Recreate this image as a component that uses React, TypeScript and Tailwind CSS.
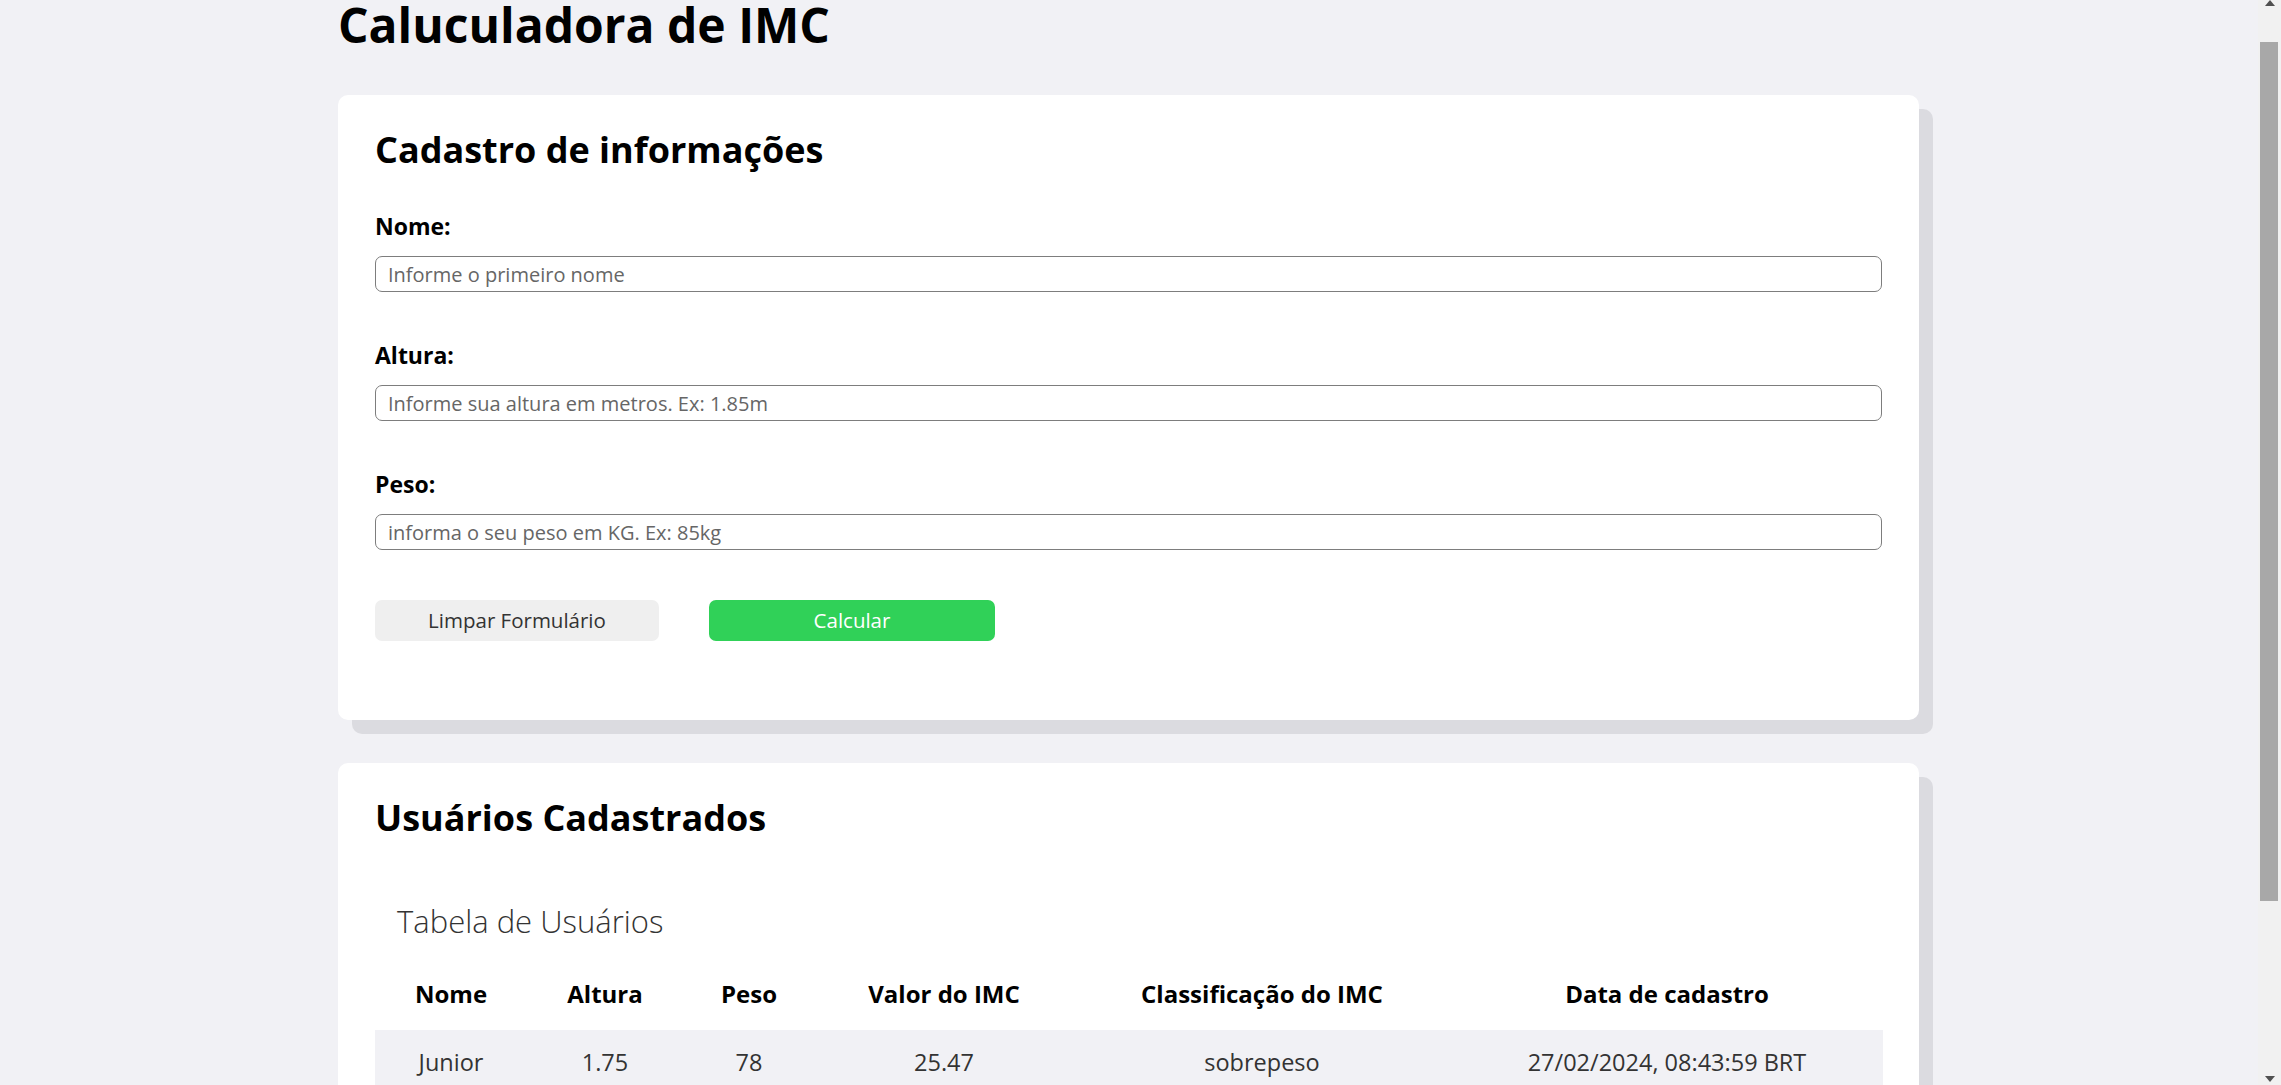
import React from "react";

const columns = [
  { label: "Nome", width: "w-[152px]" },
  { label: "Altura", width: "w-[156px]" },
  { label: "Peso", width: "w-[132px]" },
  { label: "Valor do IMC", width: "w-[258px]" },
  { label: "Classificação do IMC", width: "w-[378px]" },
  { label: "Data de cadastro", width: "w-[432px]" },
];

const users = [
  {
    nome: "Junior",
    altura: "1.75",
    peso: "78",
    imc: "25.47",
    classificacao: "sobrepeso",
    data: "27/02/2024, 08:43:59 BRT",
  },
  {
    nome: "Maria",
    altura: "1.62",
    peso: "55",
    imc: "20.96",
    classificacao: "normal",
    data: "27/02/2024, 08:45:12 BRT",
  },
];

function Field({
  label,
  placeholder,
  first,
}: {
  label: string;
  placeholder: string;
  first?: boolean;
}) {
  return (
    <div className={first ? "flex flex-col" : "mt-[52px] flex flex-col"}>
      <label className="mb-[18px] text-[23px] font-bold leading-none">{label}</label>
      <input
        type="text"
        placeholder={placeholder}
        className="h-[36px] w-full rounded-[7px] border-[1.5px] border-[#7d7d7d] bg-white px-[12px] text-[20px] text-[#333] outline-none placeholder:text-[#666]"
      />
    </div>
  );
}

function Scrollbar() {
  return (
    <div className="flex w-[23px] shrink-0 flex-col bg-[#f1f1f1]">
      {/* up arrow */}
      <div className="flex h-[21px] justify-center pl-[1px]">
        <svg width="10" height="6" viewBox="0 0 10 6">
          <polygon points="0,6 5,0 10,6" fill="#505050" />
        </svg>
      </div>
      {/* thumb */}
      <div className="mt-[21px] ml-[2px] mr-[3px] h-[859px] bg-[#a8a8a8]" />
      <div className="flex-1" />
      {/* down arrow */}
      <div className="flex h-[21px] items-end justify-center pb-[3px] pl-[1px]">
        <svg width="10" height="6" viewBox="0 0 10 6">
          <polygon points="0,0 10,0 5,6" fill="#505050" />
        </svg>
      </div>
    </div>
  );
}

export default function App() {
  return (
    <div className="flex h-screen overflow-hidden bg-[#f1f1f5] font-['Open_Sans',sans-serif] text-black">
      <main className="flex-1 overflow-hidden">
        <div className="ml-[338px] w-[1581px] pt-[1px]">
          <h1 className="text-[48px] font-bold leading-none">Caluculadora de IMC</h1>

          {/* Cadastro */}
          <section className="mt-[46px] rounded-[10px] bg-white px-[37px] pt-[37px] pb-[79px] shadow-[14px_14px_0_#dbdbe0]">
            <h2 className="text-[36px] font-bold leading-none">Cadastro de informações</h2>
            <form className="mt-[47px] flex flex-col" onSubmit={(e) => e.preventDefault()}>
              <Field first label="Nome:" placeholder="Informe o primeiro nome" />
              <Field label="Altura:" placeholder="Informe sua altura em metros. Ex: 1.85m" />
              <Field label="Peso:" placeholder="informa o seu peso em KG. Ex: 85kg" />

              <div className="mt-[50px] flex gap-[50px]">
                <button
                  type="reset"
                  className="h-[41px] w-[284px] rounded-[7px] bg-[#efefef] text-[20.5px] text-[#333]"
                >
                  Limpar Formulário
                </button>
                <button
                  type="submit"
                  className="h-[41px] w-[286px] rounded-[7px] bg-[#30d158] text-[20.5px] text-white"
                >
                  Calcular
                </button>
              </div>
            </form>
          </section>

          {/* Usuários */}
          <section className="mt-[43px] rounded-[10px] bg-white px-[37px] pt-[37px] pb-[40px] shadow-[14px_14px_0_#dbdbe0]">
            <h2 className="text-[36px] font-bold leading-none">Usuários Cadastrados</h2>
            <div className="mt-[70px] pl-[22px] text-[31px] font-light leading-none text-[#333]">
              Tabela de Usuários
            </div>
            <table className="mt-[21px] w-full table-fixed border-collapse">
              <colgroup>
                {columns.map((c) => (
                  <col key={c.label} className={c.width} />
                ))}
              </colgroup>
              <thead>
                <tr className="h-[72px]">
                  {columns.map((c) => (
                    <th key={c.label} className="text-center text-[24px] font-bold">
                      {c.label}
                    </th>
                  ))}
                </tr>
              </thead>
              <tbody>
                {users.map((u, i) => (
                  <tr
                    key={u.nome}
                    className={
                      i % 2 === 0
                        ? "h-[66px] bg-[#f1f1f5] text-[23.5px] text-[#333]"
                        : "h-[66px] bg-white text-[23.5px] text-[#333]"
                    }
                  >
                    <td className="text-center">{u.nome}</td>
                    <td className="text-center">{u.altura}</td>
                    <td className="text-center">{u.peso}</td>
                    <td className="text-center">{u.imc}</td>
                    <td className="text-center">{u.classificacao}</td>
                    <td className="text-center">{u.data}</td>
                  </tr>
                ))}
              </tbody>
            </table>
          </section>
        </div>
      </main>
      <Scrollbar />
    </div>
  );
}
